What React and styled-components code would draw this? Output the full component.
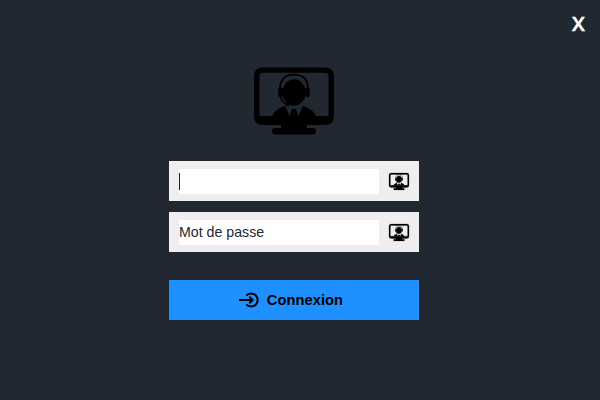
import React from "react";
import styled, { createGlobalStyle } from "styled-components";

const GlobalStyle = createGlobalStyle`
  * { box-sizing: border-box; }
  body { margin: 0; background: #222831; }
`;

const Window = styled.main`
  position: relative;
  width: 600px;
  height: 400px;
  overflow: hidden;
  background: #222831;
  font-family: "Liberation Sans", Arial, sans-serif;
  display: flex;
  flex-direction: column;
  padding: 67px 0 0 169px;
`;

const CloseButton = styled.button`
  position: absolute;
  top: 8px;
  right: 8px;
  width: 27px;
  height: 30px;
  padding: 0;
  border: 0;
  background: transparent;
  color: #fff;
  font: 600 20.5px/30px "Open Sans", sans-serif;
  -webkit-text-stroke: 0.5px #fff;
  text-align: center;
`;

const Logo = styled.div`
  width: 250px;
  height: 68px;
  display: flex;
  justify-content: center;
  margin-bottom: 26px;
`;

const AgentSvg = styled.svg`
  display: block;
  flex: none;
  overflow: visible;
  width: ${(p) => p.$width}px;
  height: ${(p) => p.$width * 0.85}px;
`;

const Form = styled.form`
  width: 250px;
  display: flex;
  flex-direction: column;
`;

const Field = styled.label`
  height: 40px;
  margin-bottom: ${(p) => p.$gap}px;
  padding: 0 10px;
  background: #eee;
  display: flex;
  align-items: center;
  justify-content: space-between;
`;

const Entry = styled.div`
  width: 200px;
  height: 25px;
  background: #fff;
  color: #222831;
  font-size: 14.2px;
  line-height: 25px;
  display: flex;
  align-items: center;
`;

const Caret = styled.span`
  width: 1px;
  height: 17px;
  background: #222;
`;

const Submit = styled.button`
  height: 40px;
  border: 0;
  padding: 0 6px 0 0;
  background: #1e90ff;
  color: #000;
  font: bold 14.67px/40px "Liberation Sans", Arial, sans-serif;
  letter-spacing: 0.06px;
  display: flex;
  align-items: center;
  justify-content: center;
  gap: 7px;
`;

const LoginSvg = styled.svg`
  width: 21px;
  height: 16px;
  flex: none;
`;

function AgentIcon({ width, outline = 0 }) {
  return (
    <AgentSvg $width={width} viewBox="0 0 80 68" aria-hidden="true">
      <path
        fillRule="evenodd"
        stroke="#000"
        strokeWidth={outline}
        d="M9 .4H71Q80 .4 80 9V49Q80 58 71 58H53V61H59Q62 61 62 64.2T59 67.5H21Q18 67.5 18 64.2T21 61H27V58H9Q0 58 0 49V9Q0 .4 9 .4ZM8.5 5.7Q5.5 5.7 5.5 8.7V49H74.5V8.7Q74.5 5.7 71.5 5.7Z"
      />
      <ellipse cx="40" cy="25.5" rx="11.7" ry="13.2" />
      <path d="M26 22C26 12.5 31 7.7 40 7.7S54 12.5 54 22" fill="none" stroke="#000" strokeWidth="1.8" />
      <rect x="24.2" y="20.5" width="4.6" height="9.5" rx="1.8" />
      <rect x="51.2" y="20.5" width="4.6" height="9.5" rx="1.8" />
      <path d="M26 29Q27.5 35 33.5 37.5" fill="none" stroke="#000" strokeWidth="1.4" />
      <ellipse cx="33.2" cy="37.8" rx="2.3" ry="1.3" transform="rotate(25 33.2 37.8)" />
      <path d="M18 50Q19 43.5 31 38.8L36 50ZM62 50Q61 43.5 49 38.8L44 50Z" />
      <path d="M38 41.7H42L42.7 44L44.5 50H35.5L37.3 44Z" />
    </AgentSvg>
  );
}

export default function App() {
  return (
    <>
      <GlobalStyle />
      <Window>
        <CloseButton aria-label="Fermer">X</CloseButton>
        <Logo>
          <AgentIcon width={80} />
        </Logo>
        <Form>
          <Field $gap={11}>
            <Entry><Caret /></Entry>
            <AgentIcon width={20} outline={1} />
          </Field>
          <Field $gap={28}>
            <Entry>Mot de passe</Entry>
            <AgentIcon width={20} outline={1} />
          </Field>
          <Submit type="button">
            <LoginSvg viewBox="0 0 21 16" fill="none" stroke="#000" strokeWidth="2">
              <path d="M7.3 3.7A6.5 6.5 0 1 1 7.3 12.3M0 8H13.5M10.3 4.7L13.6 8L10.3 11.3" />
            </LoginSvg>
            Connexion
          </Submit>
        </Form>
      </Window>
    </>
  );
}
